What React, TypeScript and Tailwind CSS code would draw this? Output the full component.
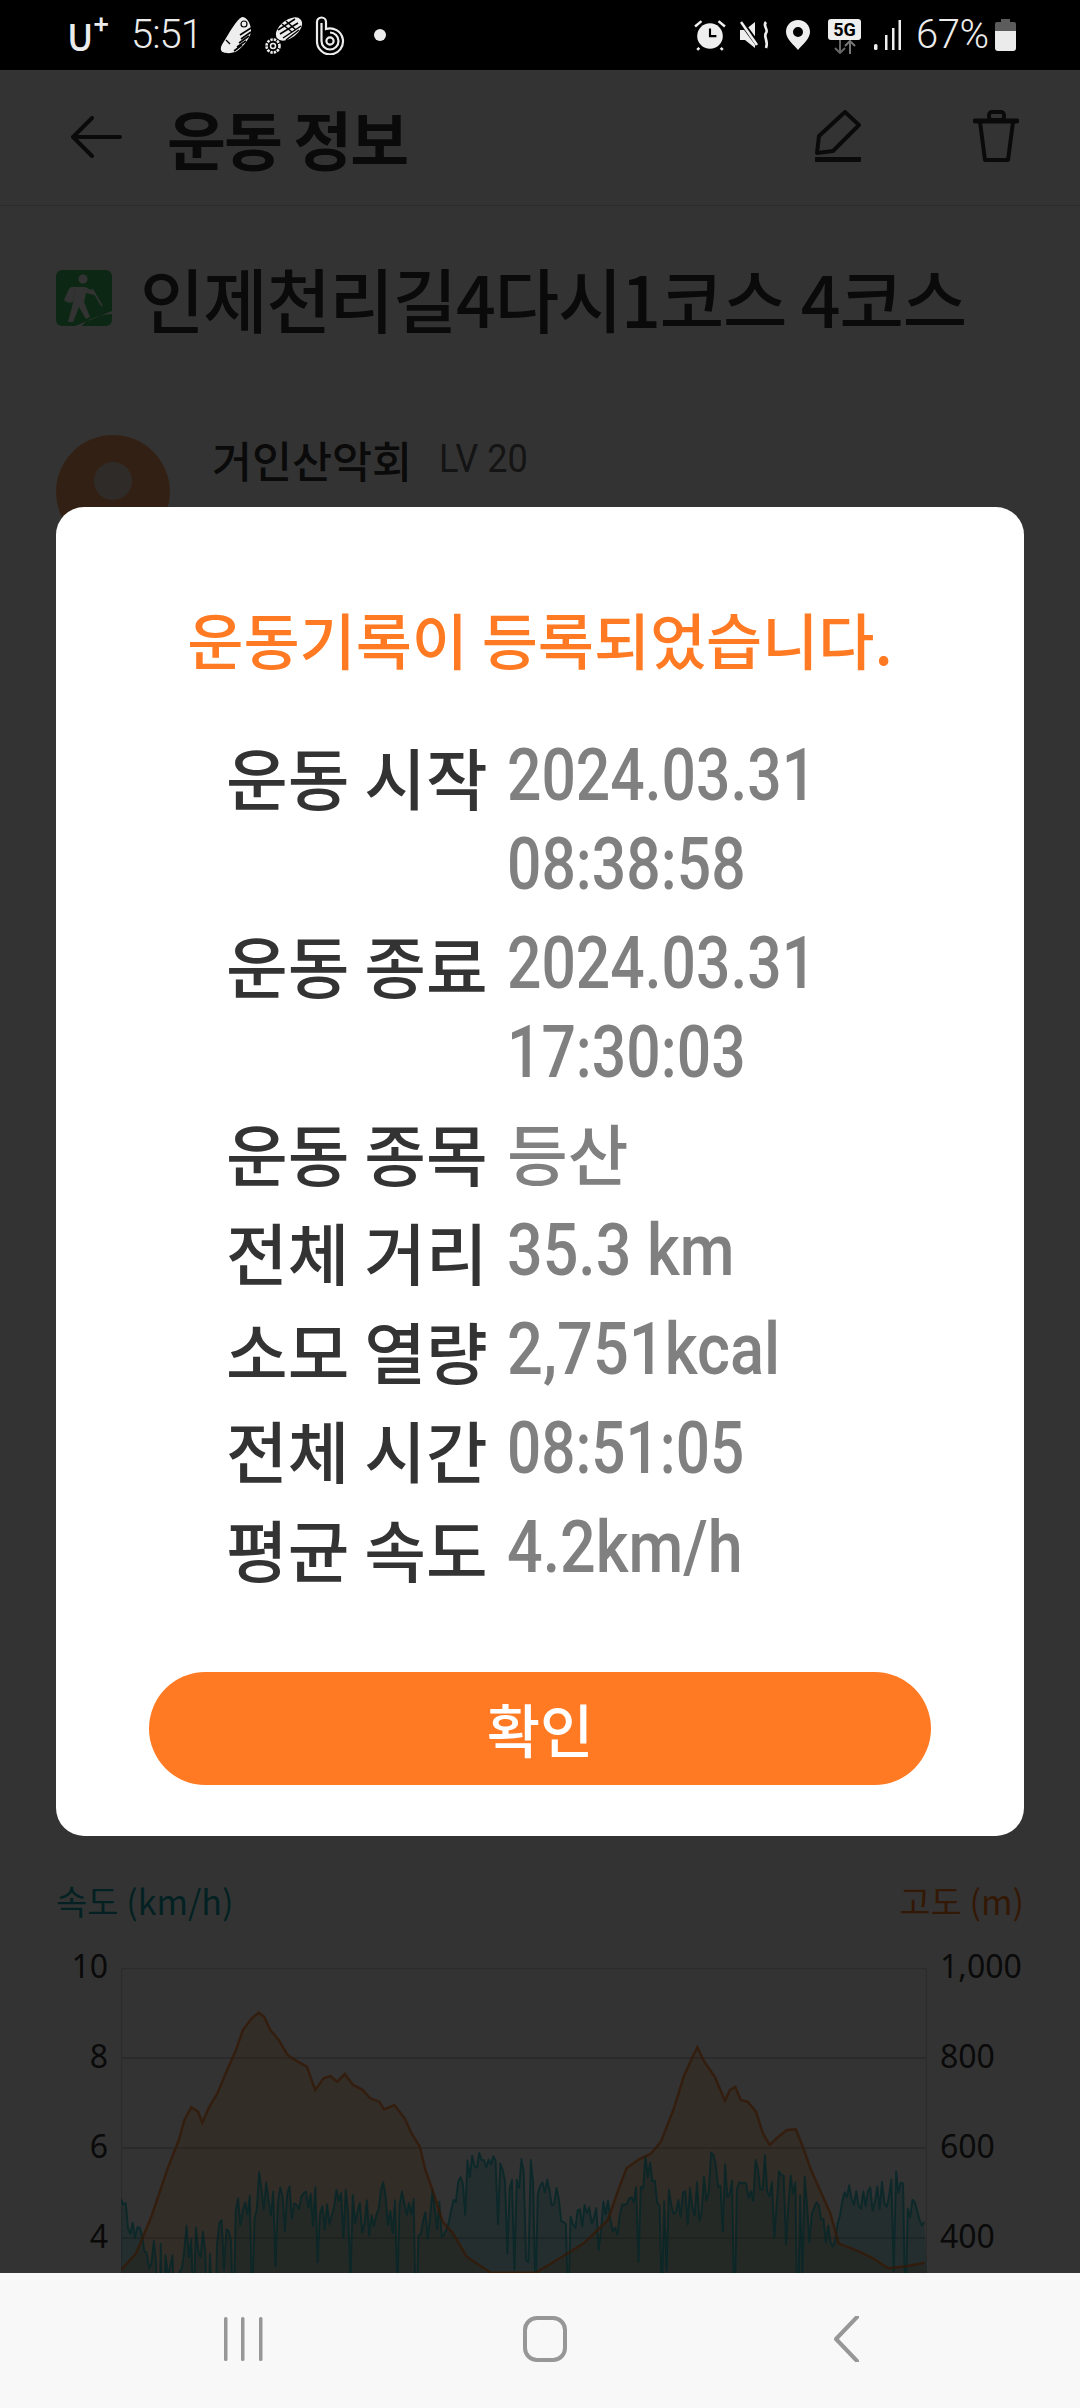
import { clsx } from "clsx";
import type { ReactNode } from "react";

// elevation line, read off the reference in zoom coordinates
const elevation: [number, number][] = [
  [178, 1410], [200, 1360], [222, 1250], [245, 1110], [262, 1020], [270, 960], [280, 922], [290, 935], [296, 968],
  [305, 925], [318, 880], [332, 810], [345, 750], [355, 690], [368, 655], [378, 638], [386, 650], [395, 690],
  [407, 720], [420, 765], [435, 785], [448, 800], [460, 870], [472, 835], [482, 828], [492, 845], [503, 822],
  [515, 855], [528, 868], [540, 895], [553, 905], [560, 928], [575, 915], [590, 955], [600, 1000], [612, 1040],
  [620, 1110], [632, 1180], [645, 1265], [660, 1300], [680, 1370], [715, 1418], [780, 1418], [815, 1375],
  [850, 1330], [885, 1260], [900, 1170], [912, 1105], [930, 1078], [948, 1060], [962, 1025], [980, 930],
  [995, 830], [1008, 770], [1015, 742], [1025, 785], [1040, 830], [1055, 902], [1062, 870], [1070, 860],
  [1078, 900], [1088, 905], [1100, 935], [1110, 1000], [1120, 1035], [1130, 1015], [1145, 990], [1158, 988],
  [1168, 1040], [1180, 1110], [1195, 1180], [1208, 1240], [1220, 1330], [1250, 1355], [1270, 1375],
  [1292, 1405], [1320, 1398], [1345, 1388],
];

const envelope: [number, number][] = [
  [178, 1130], [195, 1220], [215, 1300], [240, 1260], [330, 1260], [360, 1130], [395, 1075], [450, 1040], [560, 1040],
  [610, 1065], [650, 1060], [710, 1040], [760, 1050], [800, 1120], [850, 1170], [875, 1110], [900, 1200],
  [935, 1045], [960, 1100], [1020, 1050], [1120, 1060], [1190, 1120], [1210, 1190], [1230, 1075], [1290, 1075], [1345, 1170],
];

const toX = (x: number) => x / 1.452 - 122.6;
const toY = (y: number) => y / 3 - 168;

function lerp(points: [number, number][], x: number) {
  for (let i = 1; i < points.length; i++) {
    if (x <= points[i][0]) {
      const [x0, y0] = points[i - 1];
      const [x1, y1] = points[i];
      return y0 + ((y1 - y0) * (x - x0)) / (x1 - x0);
    }
  }
  return points[points.length - 1][1];
}

function speedLine() {
  let seed = 4711;
  const rnd = () => {
    seed = (seed * 16807) % 2147483647;
    return seed / 2147483647;
  };
  const out: string[] = [];
  let walk = 40;
  for (let x = 178; x <= 1345; x += 3.4) {
    walk = Math.min(110, Math.max(0, walk + (rnd() - 0.5) * 50));
    const hill = lerp(elevation, x) < 1300;
    const spike = rnd() > 0.9 ? 130 + rnd() * 260 : 0;
    const y = lerp(envelope, x) + walk * (hill ? 1.3 : 0.9) + rnd() * (hill ? 130 : 80) + spike;
    out.push(`${toX(x).toFixed(1)},${toY(y).toFixed(1)}`);
  }
  return out.join(" ");
}

const elevationLine = elevation.map(([x, y]) => `${toX(x).toFixed(1)},${toY(y).toFixed(1)}`).join(" ");
const speed = speedLine();

const rows: { label: string; values: string[]; scale?: string; plain?: boolean }[] = [
  { label: "운동 시작", values: ["2024.03.31", "08:38:58"], scale: "scale-x-[0.83]" },
  { label: "운동 종료", values: ["2024.03.31", "17:30:03"], scale: "scale-x-[0.83]" },
  { label: "운동 종목", values: ["등산"], plain: true },
  { label: "전체 거리", values: ["35.3 km"], scale: "scale-x-[0.86]" },
  { label: "소모 열량", values: ["2,751kcal"], scale: "scale-x-[0.865]" },
  { label: "전체 시간", values: ["08:51:05"], scale: "scale-x-[0.825]" },
  { label: "평균 속도", values: ["4.2km/h"], scale: "scale-x-[0.86]" },
];

function Narrow({ children, className }: { children: ReactNode; className?: string }) {
  return <span className={clsx("inline-block origin-left whitespace-pre", className)}>{children}</span>;
}

function StatusLeft() {
  return (
    <div className="flex items-center">
      <div className="flex items-start w-[64px] text-[36px] leading-[36px] font-medium text-[#ececec]">
        U<span className="text-[26px] leading-[20px] font-bold -mt-[4px]">+</span>
      </div>
      <span className="text-[40px] leading-[40px] font-['Roboto',sans-serif] font-light text-[#ececec] tracking-[-1px] w-[89px]">5:51</span>
      <svg width="32" height="38" viewBox="0 0 32 38" className="mr-[13px]">
        <path d="M22 1C27 1 30 7 31 13C32 20 24 30 17 35C12 38 2 38 1 34C0 30 4 26 6 22C10 16 16 4 22 1Z" fill="#eee" />
        <path d="M31 12L20 19M31 16L21 23M29 20L19 27M26 25L17 31M22 29L14 35" stroke="#000" strokeWidth="1.6" />
        <circle cx="24" cy="8" r="3" fill="none" stroke="#000" strokeWidth="1.2" />
        <path d="M6 24L10 28" stroke="#000" strokeWidth="1.2" />
      </svg>
      <svg width="38" height="38" viewBox="0 0 38 38" className="mr-[12px]">
        <ellipse cx="24" cy="13" rx="15" ry="9" transform="rotate(-38 24 13)" fill="#eee" />
        <path d="M13 14L30 3M15 18L33 7M18 22L36 10M21 24L34 14M17 8L27 16M21 5L31 14" stroke="#000" strokeWidth="1.5" />
        <circle cx="8" cy="30" r="6.5" fill="none" stroke="#eee" strokeWidth="2.6" strokeDasharray="2.4 1" />
        <circle cx="8" cy="30" r="2.5" fill="none" stroke="#eee" strokeWidth="1.5" />
      </svg>
      <svg width="32" height="39" viewBox="0 0 32 39" fill="none" stroke="#eee" strokeWidth="2.2" className="mr-[27px]">
        <path d="M2 25V6A4.5 4.5 0 0 1 11 6V13A13 13 0 1 1 2 25" />
        <path d="M6.5 7V25A8.5 8.5 0 1 0 15 16.5" />
        <circle cx="15" cy="25" r="3.6" />
      </svg>
      <div className="w-[12px] h-[12px] rounded-full bg-[#ececec]" />
    </div>
  );
}

function StatusRight() {
  return (
    <div className="flex items-center">
      <svg width="32" height="32" viewBox="0 0 30 30" className="mr-[14px]">
        <circle cx="15" cy="16" r="12" fill="#eee" />
        <path d="M15 9V16H21" fill="none" stroke="#000" strokeWidth="2" />
        <path d="M1 7L7 2M29 7L23 2M5 27L3 29M25 27L27 29" stroke="#eee" strokeWidth="2.4" />
      </svg>
      <svg width="30" height="28" viewBox="0 0 30 28" className="mr-[16px]">
        <path d="M0 9H5L15 1V27L5 19H0Z" fill="#eee" />
        <path d="M2 2L19 25" stroke="#000" strokeWidth="5" />
        <path d="M1 1L17 24" stroke="#eee" strokeWidth="2.6" />
        <path d="M26 1C22 5 29 8 26 12C23 16 29 20 26 27" fill="none" stroke="#eee" strokeWidth="2.6" />
      </svg>
      <svg width="24" height="30" viewBox="0 0 24 30" className="mr-[18px]">
        <path fillRule="evenodd" d="M12 0C5 0 0 5 0 12C0 19 8 25 12 30C16 25 24 19 24 12C24 5 19 0 12 0ZM12 7A5 5 0 1 1 12 17A5 5 0 0 1 12 7Z" fill="#eee" />
      </svg>
      <div className="flex flex-col items-center w-[33px] mr-[13px] mt-[2px]">
        <span className="w-[33px] h-[21px] rounded-[3px] bg-[#eee] text-black text-[18px] leading-[21px] font-bold text-center font-['Roboto',sans-serif]">5G</span>
        <svg width="24" height="14" viewBox="0 0 24 14" fill="none" strokeWidth="2">
          <path d="M7 0V13M2 8L7 13L12 8" stroke="#666" />
          <path d="M17 14V1M12 6L17 1L22 6" stroke="#777" />
        </svg>
      </div>
      <svg width="27" height="30" viewBox="0 0 27 30" className="mr-[15px]" fill="#eee">
        <rect x="0" y="24" width="3.5" height="6" rx="1.5" />
        <rect x="11" y="15" width="2.5" height="15" />
        <rect x="18" y="8" width="2.5" height="22" />
        <rect x="24.5" y="0" width="2.5" height="30" />
      </svg>
      <span className="text-[40px] leading-[40px] font-['Roboto',sans-serif] font-light text-[#ececec] tracking-[-0.5px] w-[79px]">67%</span>
      <svg width="21" height="32" viewBox="0 0 21 32">
        <path d="M6 0H15V3H19Q21 3 21 5V12H0V5Q0 3 2 3H6Z" fill="#5c5c5c" />
        <path d="M0 12H21V29Q21 32 18 32H3Q0 32 0 29Z" fill="#ebebeb" />
      </svg>
    </div>
  );
}

function HikerIcon() {
  return (
    <svg width="56" height="56" viewBox="0 0 56 56" className="mr-[28px]">
      <rect width="56" height="56" rx="6" fill="#3fc864" />
      <circle cx="27" cy="9" r="4.5" fill="#fff" />
      <path d="M8 30L13 19Q15 16 19 17L17 32Q12 34 8 30Z" fill="#fff" />
      <path d="M19 17H29L39 22L38 25L30 23L28 32L34 47L30 49L23 37L17 52H12L17 33Z" fill="#fff" />
      <path d="M36 19L46 36" stroke="#fff" strokeWidth="1.6" />
      <path d="M19 56L56 41V44C40 45 30 50 26 56Z" fill="#fff" />
    </svg>
  );
}

function PageBehind() {
  return (
    <div className="bg-white h-full">
      <header className="h-[136px] flex items-center border-b border-[#d8d8d8] pl-[70px] pr-[61px] pb-[2px]">
        <svg width="52" height="42" viewBox="0 0 52 42" fill="none" stroke="#333" strokeWidth="4" strokeLinecap="round" strokeLinejoin="round" className="mr-[45px]">
          <path d="M50 21H3M22 2L3 21L22 40" />
        </svg>
        <h1 className="text-[64px] leading-[80px] font-bold text-[#333] tracking-[-2px]">운동 정보</h1>
        <svg width="46" height="54" viewBox="0 0 46 54" fill="none" stroke="#333" strokeWidth="4" strokeLinejoin="round" className="ml-auto mr-[112px]">
          <path d="M30 2L44 15L18 41L2 43L4 26Z" />
          <path d="M0 49.5H46" strokeWidth="5" />
        </svg>
        <svg width="46" height="54" viewBox="0 0 46 54" fill="none" stroke="#333" strokeWidth="4" strokeLinejoin="round" strokeLinecap="round">
          <path d="M2 11H44" strokeWidth="5" />
          <rect x="16" y="2" width="15" height="8" rx="3" />
          <path d="M7 12L12 50H35L40 12" />
        </svg>
      </header>

      <div className="mt-[47px] ml-[56px] flex items-center h-[90px]">
        <HikerIcon />
        <span className="text-[70px] leading-[90px] font-medium text-[#333] tracking-[-1.2px]">인제천리길4다시1코스 4코스</span>
      </div>

      <div className="mt-[92px] ml-[56px] flex items-start">
        <div className="w-[114px] h-[114px] rounded-full bg-[#ff7a22] flex justify-center pt-[27px] opacity-70">
          <div className="w-[38px] h-[38px] rounded-full bg-[#e0c8b8]" />
        </div>
        <span className="ml-[42px] mt-[-3px] text-[43.5px] leading-[56px] font-medium text-[#333]">거인산악회</span>
        <Narrow className="ml-[27px] mt-[-6px] text-[38px] leading-[60px] font-['Roboto',sans-serif] text-[#666] scale-x-[0.95]">LV 20</Narrow>
      </div>

      <div className="mt-[1332px] mx-[56px] h-[40px] flex justify-between text-[34px] leading-[40px]">
        <span className="text-[#0fa7a8]">속도 (km/h)</span>
        <span className="text-[#ff7a22]">고도 (m)</span>
      </div>

      <div className="ml-[56px] flex items-start font-['Noto_Sans',sans-serif] text-[32px] text-[#333]">
        <div className="w-[52px] mr-[13px] text-right">
          {["10", "8", "6", "4"].map((n) => (
            <div key={n} className="h-[90px] leading-[90px]">{n}</div>
          ))}
        </div>
        <svg width="806" height="305" viewBox="0 0 806 305" className="mt-[47px] shrink-0">
          <path d="M0.5 305V0.5H805.5V305" fill="none" stroke="#d8d8d8" strokeWidth="1.5" />
          <path d="M0 90H806M0 180H806M0 270H806" stroke="#d0d0d0" strokeWidth="2" />
          <polygon points={`${elevationLine} 806,305 0,305`} fill="#ff7a22" fillOpacity="0.25" />
          <polygon points={`${speed} 806,305 0,305`} fill="#0fa7a8" fillOpacity="0.3" />
          <polyline points={speed} fill="none" stroke="#00b4bc" strokeWidth="2" strokeOpacity="0.7" strokeLinejoin="round" />
          <polyline points={elevationLine} fill="none" stroke="#ff7a22" strokeWidth="2.5" strokeOpacity="0.8" />
        </svg>
        <div className="w-[82px] ml-[13px]">
          {["1,000", "800", "600", "400"].map((n) => (
            <div key={n} className="h-[90px] leading-[90px]">{n}</div>
          ))}
        </div>
      </div>
    </div>
  );
}

function SavedDialog() {
  return (
    <div className="w-full bg-white rounded-[28px] pt-[88px] pb-[51px] px-[93px]">
      <p className="text-center text-[61px] leading-[88px] font-medium text-[#ff7a22] whitespace-nowrap">운동기록이 등록되었습니다.</p>
      <dl className="mt-[48px] ml-[77px] flex flex-col gap-[10px]">
        {rows.map((row) => (
          <div key={row.label} className="flex">
            <dt className="w-[281px] shrink-0 text-[67px] leading-[89px] font-medium text-[#333] whitespace-nowrap">{row.label}</dt>
            <dd className="flex flex-col items-start">
              {row.values.map((v) =>
                row.plain ? (
                  <span key={v} className="text-[66px] leading-[89px] font-medium text-[#808080]">{v}</span>
                ) : (
                  <Narrow key={v} className={clsx("text-[73px] leading-[89px] font-['Roboto',sans-serif] font-medium text-[#808080]", row.scale)}>{v}</Narrow>
                ),
              )}
            </dd>
          </div>
        ))}
      </dl>
      <button className="mt-[80px] w-full h-[113px] rounded-full bg-[#ff7a22] text-white text-[58px] leading-[113px] font-medium">확인</button>
    </div>
  );
}

export default function App() {
  return (
    <div className="w-[1080px] h-[2408px] flex flex-col overflow-hidden font-['Noto_Sans_CJK_KR','Noto_Sans',sans-serif]">
      <div className="h-[70px] shrink-0 bg-black flex items-center justify-between pl-[67px] pr-[64px]">
        <StatusLeft />
        <StatusRight />
      </div>
      <main className="relative flex-1 overflow-hidden">
        <PageBehind />
        <div className="absolute inset-0 bg-black/80 flex items-center justify-center px-[56px]">
          <SavedDialog />
        </div>
      </main>
      <nav className="h-[135px] shrink-0 bg-[#f8f8f8] flex items-center justify-center gap-[258px] pl-[10px] pb-[3px]">
        <svg width="44" height="46" viewBox="0 0 44 46" fill="#979797">
          <rect x="3" y="1" width="3.5" height="44" rx="1.5" />
          <rect x="20" y="1" width="3.5" height="44" rx="1.5" />
          <rect x="38" y="1" width="3.5" height="44" rx="1.5" />
        </svg>
        <svg width="44" height="46" viewBox="0 0 44 46" fill="none" stroke="#979797" strokeWidth="4">
          <rect x="2" y="2" width="40" height="42" rx="12" />
        </svg>
        <svg width="44" height="46" viewBox="0 0 44 46" fill="none" stroke="#979797" strokeWidth="4" strokeLinecap="round" strokeLinejoin="round">
          <path d="M32 1L11 23L32 45" />
        </svg>
      </nav>
    </div>
  );
}
